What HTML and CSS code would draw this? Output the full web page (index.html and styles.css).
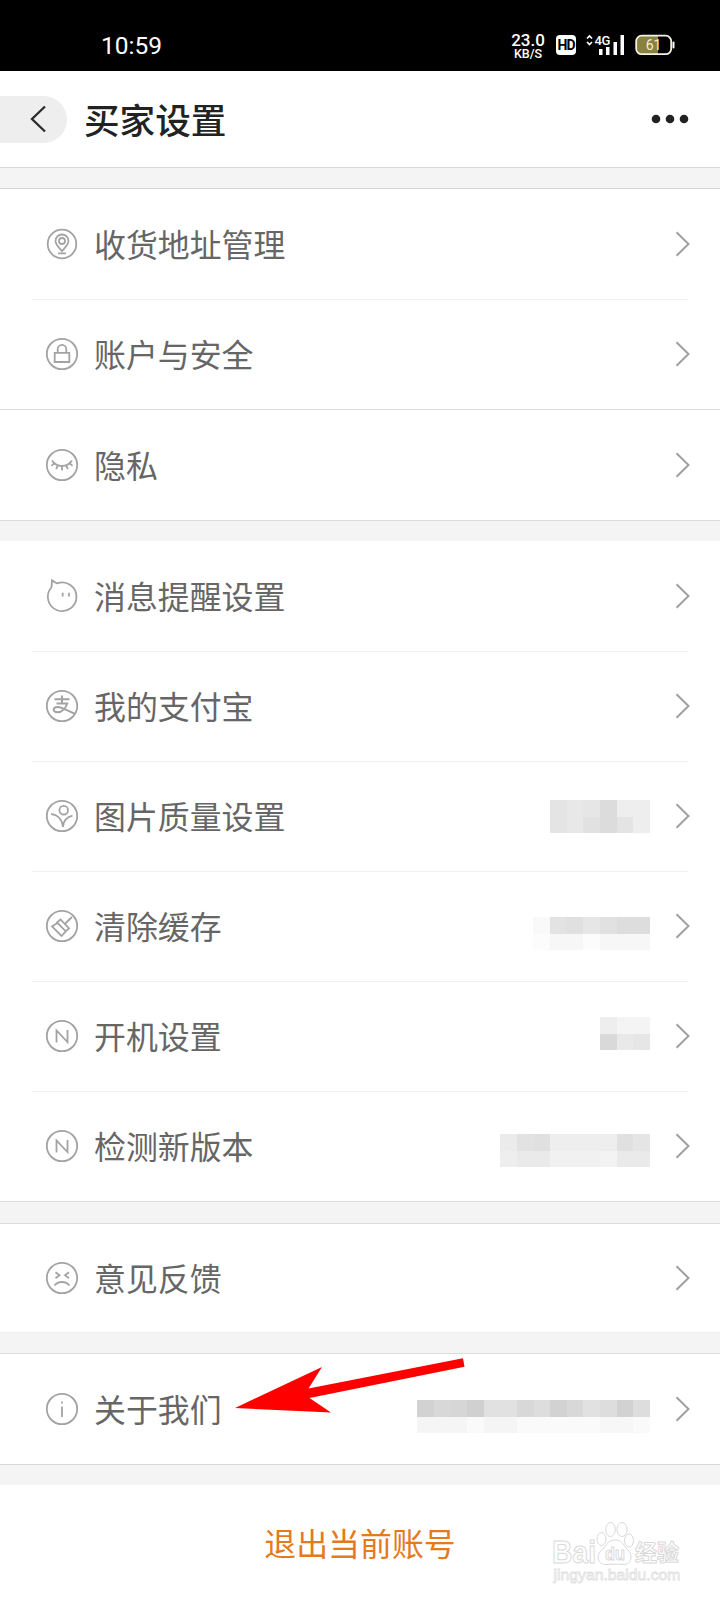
FILE: index.html
```html
<!DOCTYPE html>
<html lang="zh-CN">
<head>
<meta charset="utf-8">
<title>买家设置</title>
<link rel="stylesheet" href="styles.css">
</head>
<body>
<div class="status">
  <span class="time">10:59</span>
  <div class="status-right">
    <div class="speed"><span class="rate">23.0</span><span class="unit">KB/S</span></div>
    <span class="hd">HD</span>
    <svg class="signal" width="39" height="24" viewBox="0 0 39 24">
      <path d="M1 7.500 3.500 5 6 7.500M1 11 3.500 13.500 6 11" fill="none" stroke="#fff" stroke-width="1.700"/>
      <text x="8.500" y="14" class="net">4G</text>
      <g fill="#fff"><rect x="13" y="18" width="3.500" height="6"/><rect x="20" y="16" width="3.500" height="8"/><rect x="27.500" y="11" width="3.500" height="13"/><rect x="34.500" y="4" width="3.500" height="20"/></g>
    </svg>
    <svg class="battery" width="40" height="22" viewBox="0 0 40 22">
      <rect x="2" y="2" width="20" height="18" rx="5" fill="#8a8040"/>
      <rect x="14" y="2" width="9" height="18" fill="#8a8040"/>
      <rect x="1.200" y="1.700" width="35" height="18.500" rx="5.500" fill="none" stroke="#f4f2e6" stroke-width="1.800"/>
      <rect x="37.500" y="7.500" width="2" height="7" rx="1" fill="#fff"/>
      <text x="18.500" y="16" text-anchor="middle" class="level">61</text>
    </svg>
  </div>
</div>
<header class="header">
  <div class="back"><svg width="17" height="28" viewBox="0 0 17 28"><path d="M15 1.500 2 14l13 12.500" fill="none" stroke="#2b2b2b" stroke-width="2.300"/></svg></div>
  <h1 class="title">买家设置</h1>
  <svg class="more" width="38" height="10" viewBox="0 0 38 10" fill="#222"><circle cx="5" cy="5" r="4.300"/><circle cx="19" cy="5" r="4.300"/><circle cx="33" cy="5" r="4.300"/></svg>
</header>

<section class="group first">
  <div class="row">
    <svg class="icon" viewBox="0 0 34 34"><circle cx="17" cy="17" r="14.300"/><path d="M17 24.200c-3-3.500-6.500-6.700-6.500-10.200a6.500 6.500 0 0 1 13 0c0 3.500-3.500 6.700-6.500 10.200zM13 26.300h8"/><circle cx="17" cy="14" r="3"/></svg>
    <span class="label">收货地址管理</span><svg class="chev" viewBox="0 0 15 28"><path d="m1.500 2.200 12 11.800-12 11.800"/></svg>
  </div>
  <div class="row">
    <svg class="icon" viewBox="0 0 34 34"><circle cx="17" cy="17" r="15.200"/><path d="M9.700 15.800h14.600v9.200H9.700zM12.700 15.500v-3.300a4.300 4.300 0 0 1 8.600 0v3.300"/></svg>
    <span class="label">账户与安全</span><svg class="chev" viewBox="0 0 15 28"><path d="m1.500 2.200 12 11.800-12 11.800"/></svg>
  </div>
  <div class="row full">
    <svg class="icon" viewBox="0 0 34 34"><circle cx="17" cy="17" r="15.200"/><path d="M7 12.500c2.500 3.800 6 5.500 10 5.500s7.500-1.700 10-5.500M9.300 15.200l-2.800 2.600M12.800 17.300l-1.600 3.900M17 18v4.500M21.200 17.300l1.600 3.900M24.700 15.200l2.800 2.600"/></svg>
    <span class="label">隐私</span><svg class="chev" viewBox="0 0 15 28"><path d="m1.500 2.200 12 11.800-12 11.800"/></svg>
  </div>
</section>

<section class="group">
  <div class="row">
    <svg class="icon" viewBox="0 0 34 34"><path d="M6.300 8.500C7 6 6.800 3.500 7 1.200c1.500.8 3.200 2.500 5.200 3.200A14.300 14.300 0 1 1 6.300 8.500z"/><path d="M17.700 13.800v3.600M24 13.800v3.600"/></svg>
    <span class="label">消息提醒设置</span><svg class="chev" viewBox="0 0 15 28"><path d="m1.500 2.200 12 11.800-12 11.800"/></svg>
  </div>
  <div class="row">
    <svg class="icon" viewBox="0 0 34 34"><circle cx="17" cy="17" r="15.200"/><path stroke-width="2" d="M9.500 10.200h15M17 6.500v8M11.500 14.500h10.700c-1.500 4.500-5 8.800-9.500 8.800-2.600 0-4-1-4-2.700 0-1.800 1.800-2.700 4-2.700 4.300 0 9 3.600 17 6.800"/></svg>
    <span class="label">我的支付宝</span><svg class="chev" viewBox="0 0 15 28"><path d="m1.500 2.200 12 11.800-12 11.800"/></svg>
  </div>
  <div class="row">
    <svg class="icon" viewBox="0 0 34 34"><circle cx="17" cy="17" r="15.200"/><circle cx="18.700" cy="11.200" r="4.300"/><path d="M6 15.200c6 .3 11 4.500 12 12.800 0-5.500 3-9.500 9.500-11.300"/></svg>
    <span class="label">图片质量设置</span>
    <svg class="mosaic" width="100" height="33" viewBox="0 0 6 2" preserveAspectRatio="none" shape-rendering="crispEdges"><path fill="#e4e4e4" d="M0 0h1v2H0z"/><path fill="#e8e8e8" d="M1 0h1v2H1z"/><path fill="#e6e6e6" d="M2 0h1v1H2z"/><path fill="#dcdcdc" d="M3 0h1v2H3z"/><path fill="#eee" d="M4 0h2v2H4z"/><path fill="#e1e1e1" d="M2 1h1v1H2z"/><path fill="#e4e4e4" d="M4 1h1v1H4z"/></svg>
    <svg class="chev" viewBox="0 0 15 28"><path d="m1.500 2.200 12 11.800-12 11.800"/></svg>
  </div>
  <div class="row">
    <svg class="icon" viewBox="0 0 34 34"><circle cx="17" cy="17" r="15.200"/><path d="M12 13.500 15.500 10.500 24 19.500 20.800 22.300zM12.500 14 7 17.500 16.500 27l4.300-4.700M19.800 15 27 8"/></svg>
    <span class="label">清除缓存</span>
    <svg class="mosaic low" width="117" height="33" viewBox="0 0 7 2" preserveAspectRatio="none" shape-rendering="crispEdges"><path fill="#f9f9f9" d="M0 0h1v1H0z"/><path fill="#e3e3e3" d="M1 0h1v1H1z"/><path fill="#e0e0e0" d="M2 0h1v1H2z"/><path fill="#e6e6e6" d="M3 0h1v1H3z"/><path fill="#e1e1e1" d="M4 0h1v1H4z"/><path fill="#ddd" d="M5 0h2v1H5z"/><path fill="#fcfcfc" d="M0 1h4v1H0z"/><path fill="#f7f7f7" d="M1 1h2v1H1zM4 1h3v1H4z"/></svg>
    <svg class="chev" viewBox="0 0 15 28"><path d="m1.500 2.200 12 11.800-12 11.800"/></svg>
  </div>
  <div class="row">
    <svg class="icon" viewBox="0 0 34 34"><circle cx="17" cy="17" r="15.200"/><path d="M11.500 23.500V11.500L22.500 23V11"/></svg>
    <span class="label">开机设置</span>
    <svg class="mosaic high" width="50" height="33" viewBox="0 0 3 2" preserveAspectRatio="none" shape-rendering="crispEdges"><path fill="#eee" d="M0 0h1v1H0z"/><path fill="#f4f4f4" d="M1 0h2v1H1z"/><path fill="#d9d9d9" d="M0 1h1v1H0z"/><path fill="#e9e9e9" d="M1 1h1v1H1z"/><path fill="#e6e6e6" d="M2 1h1v1H2z"/></svg>
    <svg class="chev" viewBox="0 0 15 28"><path d="m1.500 2.200 12 11.800-12 11.800"/></svg>
  </div>
  <div class="row">
    <svg class="icon" viewBox="0 0 34 34"><circle cx="17" cy="17" r="15.200"/><path d="M11.500 23.500V11.500L22.500 23V11"/></svg>
    <span class="label">检测新版本</span>
    <svg class="mosaic mid" width="150" height="33" viewBox="0 0 9 2" preserveAspectRatio="none" shape-rendering="crispEdges"><path fill="#ebebeb" d="M0 0h1v1H0z"/><path fill="#e2e2e2" d="M1 0h1v1H1z"/><path fill="#e0e0e0" d="M2 0h1v1H2zM7 0h1v1H7z"/><path fill="#eee" d="M3 0h4v1H3zM0 1h1v1H0z"/><path fill="#e5e5e5" d="M8 0h1v1H8z"/><path fill="#eaeaea" d="M1 1h2v1H1zM7 1h2v1H7z"/><path fill="#f1f1f1" d="M3 1h3v1H3z"/><path fill="#f3f3f3" d="M6 1h1v1H6z"/></svg>
    <svg class="chev" viewBox="0 0 15 28"><path d="m1.500 2.200 12 11.800-12 11.800"/></svg>
  </div>
</section>

<section class="group lined">
  <div class="row">
    <svg class="icon" viewBox="0 0 34 34"><circle cx="17" cy="17" r="15.200"/><path d="M10.500 11.200l4 3-4 3M24 11.200l-4 3 4 3M9.500 24.500c2-2.500 4.600-3.500 7.500-3.500s5.500 1 7.500 3.500"/></svg>
    <span class="label">意见反馈</span><svg class="chev" viewBox="0 0 15 28"><path d="m1.500 2.200 12 11.800-12 11.800"/></svg>
  </div>
</section>

<section class="group lined about">
  <div class="row">
    <svg class="icon" viewBox="0 0 34 34"><circle cx="17" cy="17" r="15.200"/><path d="M17 14.500V25M17 9.500v2"/></svg>
    <span class="label">关于我们</span>
    <svg class="mosaic low" width="233" height="33" viewBox="0 0 14 2" preserveAspectRatio="none" shape-rendering="crispEdges"><path fill="#d2d2d2" d="M0 0h1v1H0zM8 0h1v1H8zM12 0h1v1h-1z"/><path fill="#d8d8d8" d="M1 0h1v1H1zM6 0h1v1H6zM9 0h1v1H9z"/><path fill="#d6d6d6" d="M2 0h1v1H2z"/><path fill="#d0d0d0" d="M3 0h1v1H3z"/><path fill="#e1e1e1" d="M4 0h2v1H4zM10 0h1v1h-1z"/><path fill="#ddd" d="M7 0h1v1H7zM11 0h1v1h-1zM13 0h1v1h-1z"/><path fill="#fafafa" d="M0 1h14v1H0z"/><path fill="#f5f5f5" d="M0 1h3v1H0zM4 1h2v1H4z"/><path fill="#f7f7f7" d="M11 1h2v1h-2z"/></svg>
    <svg class="chev" viewBox="0 0 15 28"><path d="m1.500 2.200 12 11.800-12 11.800"/></svg>
  </div>
  <svg class="arrow" width="232" height="58" viewBox="0 0 232 58"><path fill="#f00" d="M0 50 87 9 73.500 30.500 228 .3l1.500 8.500L74.500 40 96 54.500z"/></svg>
</section>

<footer class="footer">
  <span class="logout">退出当前账号</span>
  <svg class="watermark" width="136" height="68" viewBox="0 0 136 68">
    <g class="wm">
      <path d="M63 27c6 0 8 4 11 8 3 3 5 5 5 9 0 5-4 8-8 7.500-5-.5-11-.5-16 0-5 .5-9-2.500-9-7.500 0-4 3-6 6-9 3-4 5-8 11-8z"/>
      <ellipse cx="49.500" cy="26" rx="4.500" ry="6.500"/><ellipse cx="58.500" cy="16.500" rx="4.800" ry="7"/><ellipse cx="70" cy="16.500" rx="5" ry="7"/><ellipse cx="77" cy="27.500" rx="4.500" ry="6.500"/>
      <text x="0" y="49.500" class="wm-big" textLength="44" lengthAdjust="spacingAndGlyphs">Bai</text>
      <text x="53" y="47" class="wm-du" textLength="20" lengthAdjust="spacingAndGlyphs">du</text>
      <text x="83" y="47.500" class="wm-cjk" textLength="44" lengthAdjust="spacingAndGlyphs">经验</text>
      <text x="1.500" y="66.500" class="wm-url" textLength="127" lengthAdjust="spacingAndGlyphs">jingyan.baidu.com</text>
    </g>
  </svg>
</footer>
</body>
</html>
```
FILE: styles.css
```css
* { box-sizing: border-box; }
body {
  margin: 0;
  width: 720px;
  height: 1600px;
  overflow: hidden;
  background: #f4f4f4;
  color: #666;
  font-family: "Noto Sans CJK SC", sans-serif;
}
svg { display: block; flex: none; overflow: visible; }

.status {
  height: 71px;
  padding: 33px 45px 0 101px;
  display: flex;
  justify-content: space-between;
  background: #000;
  color: #fff;
  font-family: Roboto, sans-serif;
}
.time { font-size: 24.5px; line-height: 25px; }
.status-right { display: flex; height: 26px; }
.speed { width: 34px; display: flex; flex-direction: column; align-items: center; font-weight: 500; }
.rate { font-size: 17px; line-height: 14px; }
.unit { font-size: 12.5px; line-height: 13px; }
.hd {
  width: 20px;
  height: 20px;
  margin: 2px 10px 0 11px;
  border-radius: 4px;
  background: #fff;
  color: #000;
  font-size: 14px;
  font-weight: 700;
  line-height: 21px;
  text-align: center;
  letter-spacing: -1px;
}
.signal { margin-right: 10px; margin-top: -2px; }
.net { font: 500 13px Roboto, sans-serif; fill: #fff; letter-spacing: -.5px; }
.battery { margin-top: 1px; }
.level { font: 14px Roboto, sans-serif; fill: #f5efc8; }

.header {
  height: 97px;
  padding-right: 31px;
  display: flex;
  align-items: center;
  background: #fff;
  border-bottom: 1px solid #d8d8d8;
}
.back {
  width: 67px;
  height: 47px;
  padding-left: 30px;
  display: flex;
  align-items: center;
  border-radius: 0 24px 24px 0;
  background: #eeeeee;
}
.title {
  flex: 1;
  margin: 0 0 1px 17px;
  color: #222;
  font-size: 35.6px;
  font-weight: 500;
  line-height: 48px;
}

.group { margin-bottom: 21px; background: #fff; border-bottom: 1px solid #dcdcdc; }
.first { margin-top: 20px; margin-bottom: 20px; border-top: 1px solid #d6d6d6; }
.lined { height: 110px; border-top: 1px solid #dcdcdc; border-bottom-color: #f0f0f0; margin-bottom: 20px; }
.about { position: relative; height: 112px; border-bottom-color: #d8d8d8; }
.row {
  position: relative;
  height: 110px;
  padding: 0 30px 0 45px;
  display: flex;
  align-items: center;
}
.row + .row::before {
  content: "";
  position: absolute;
  top: 0;
  left: 32px;
  width: 656px;
  height: 1px;
  background: #f0f0f0;
}
.row.full { height: 111px; padding-top: 1px; }
.row + .full::before { left: 0; width: 720px; background: #dcdcdc; }
.lined .row { height: 108px; }
.about .row { height: 110px; }
.icon { width: 34px; height: 34px; }
.icon, .chev { fill: none; stroke: #a3a3a3; stroke-width: 1.8; }
.chev { width: 15px; height: 28px; stroke: #a0a0a0; stroke-width: 2; }
.label {
  flex: 1;
  margin: -2px 0 0 15px;
  font-size: 31.9px;
  line-height: 46px;
}
.mosaic { margin-right: 25px; margin-top: 1px; }
.low { margin-top: 15px; }
.high { margin-top: -5px; }
.mid { margin-top: 8px; }
.arrow { position: absolute; left: 235px; top: 4px; }

.footer {
  position: relative;
  height: 116px;
  display: flex;
  justify-content: center;
  background: #fff;
}
.logout { margin-top: 34px; font-size: 31.9px; line-height: 46px; color: #e37a1c; }
.watermark { position: absolute; left: 552px; top: 28px; }
.wm { fill: #fff; stroke: #d9d9d9; stroke-width: 1; }
.wm-big { font: 700 31px "Liberation Sans", sans-serif; }
.wm-du { font: 700 19px "Liberation Sans", sans-serif; }
.wm-cjk { font: 700 23px "Noto Sans CJK SC", sans-serif; }
.wm-url { font: 15.5px "Liberation Sans", sans-serif; stroke: #e0e0e0; stroke-width: .8; }
```
